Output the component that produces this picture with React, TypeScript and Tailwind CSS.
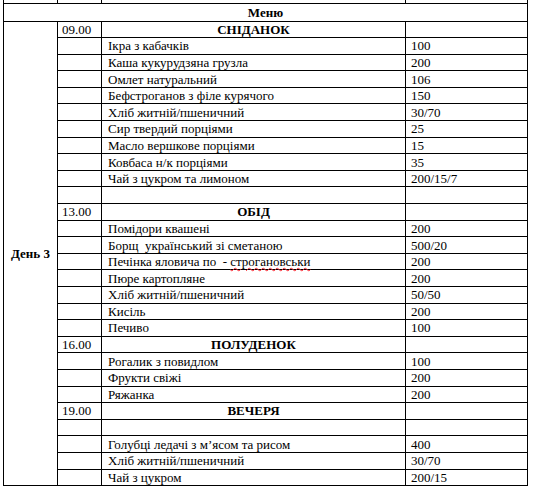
import React from 'react';

type Row =
  | { kind: 'meal'; time: string; title: string }
  | { kind: 'dish'; name: string; weight: string; squiggle?: string }
  | { kind: 'blank' };

// Day 3 menu, in the order it is printed
const rows: Row[] = [
  { kind: 'meal', time: '09.00', title: 'СНІДАНОК' },
  { kind: 'dish', name: 'Ікра з кабачків', weight: '100' },
  { kind: 'dish', name: 'Каша кукурудзяна грузла', weight: '200' },
  { kind: 'dish', name: 'Омлет натуральний', weight: '106' },
  { kind: 'dish', name: 'Бефстроганов з філе курячого', weight: '150' },
  { kind: 'dish', name: 'Хліб житній/пшеничний', weight: '30/70' },
  { kind: 'dish', name: 'Сир твердий порціями', weight: '25' },
  { kind: 'dish', name: 'Масло вершкове порціями', weight: '15' },
  { kind: 'dish', name: 'Ковбаса н/к порціями', weight: '35' },
  { kind: 'dish', name: 'Чай з цукром та лимоном', weight: '200/15/7' },
  { kind: 'blank' },
  { kind: 'meal', time: '13.00', title: 'ОБІД' },
  { kind: 'dish', name: 'Помідори квашені', weight: '200' },
  { kind: 'dish', name: 'Борщ  український зі сметаною', weight: '500/20' },
  { kind: 'dish', name: 'Печінка яловича по  - ', squiggle: 'строгановськи', weight: '200' },
  { kind: 'dish', name: 'Пюре картопляне', weight: '200' },
  { kind: 'dish', name: 'Хліб житній/пшеничний', weight: '50/50' },
  { kind: 'dish', name: 'Кисіль', weight: '200' },
  { kind: 'dish', name: 'Печиво', weight: '100' },
  { kind: 'meal', time: '16.00', title: 'ПОЛУДЕНОК' },
  { kind: 'dish', name: 'Рогалик з повидлом', weight: '100' },
  { kind: 'dish', name: 'Фрукти свіжі', weight: '200' },
  { kind: 'dish', name: 'Ряжанка', weight: '200' },
  { kind: 'meal', time: '19.00', title: 'ВЕЧЕРЯ' },
  { kind: 'blank' },
  { kind: 'dish', name: 'Голубці ледачі з м’ясом та рисом', weight: '400' },
  { kind: 'dish', name: 'Хліб житній/пшеничний', weight: '30/70' },
  { kind: 'dish', name: 'Чай з цукром', weight: '200/15' },
];

// font set on every cell: table cells may not inherit it from the page
const cell =
  'border border-black p-0 align-middle leading-none text-black [font-family:Liberation_Serif,Times_New_Roman,serif] text-[13px]';

export default function App() {
  return (
    <div className="w-[541px] h-[493px] bg-white overflow-hidden [font-family:Liberation_Serif,Times_New_Roman,serif]">
      <table className="ml-[3px] w-[524px] border-collapse table-fixed">
        <colgroup>
          <col className="w-[54px]" />
          <col className="w-[44px]" />
          <col className="w-[304px]" />
          <col className="w-[122px]" />
        </colgroup>
        <tbody>
          {/* tail of the previous day, cut off at the top */}
          <tr className="h-[3px]">
            <td className={`${cell} border-t-0`} />
            <td className={`${cell} border-t-0`} />
            <td className={`${cell} border-t-0`} />
            <td className={`${cell} border-t-0`} />
          </tr>
          <tr className="h-[18px]">
            <td colSpan={4} className={`${cell} text-center font-bold`}>
              Меню
            </td>
          </tr>
          {rows.map((r, i) => (
            <tr key={i} className="h-[16.6px]">
              {i === 0 && (
                <td rowSpan={rows.length} className={`${cell} text-center font-bold`}>
                  День 3
                </td>
              )}
              <td className={`${cell} pl-[4px]`}>{r.kind === 'meal' ? r.time : ''}</td>
              {r.kind === 'meal' ? (
                <td className={`${cell} text-center font-bold`}>{r.title}</td>
              ) : (
                <td className={`${cell} pl-[6px] whitespace-pre`}>
                  {r.kind === 'dish' ? r.name : ''}
                  {r.kind === 'dish' && r.squiggle && (
                    <span className="underline decoration-wavy decoration-red-500 decoration-1">
                      {r.squiggle}
                    </span>
                  )}
                </td>
              )}
              <td className={`${cell} pl-[5px]`}>{r.kind === 'dish' ? r.weight : ''}</td>
            </tr>
          ))}
        </tbody>
      </table>
    </div>
  );
}
